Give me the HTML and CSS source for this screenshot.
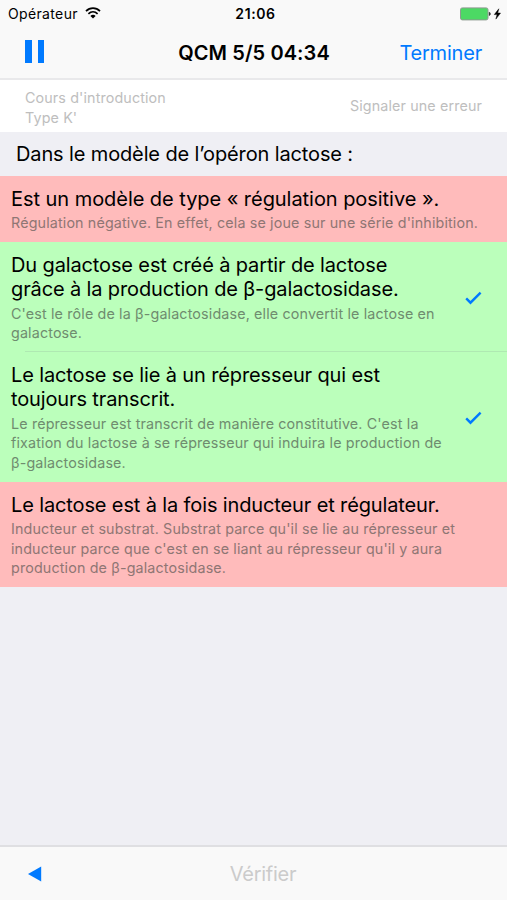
FILE: index.html
```html
<!DOCTYPE html>
<html lang="fr">
<head>
    <meta charset="UTF-8">
    <meta name="viewport" content="width=device-width, initial-scale=1.0">
    <title>QCM 5/5</title>
    <link rel="stylesheet" href="styles.css">
</head>
<body>
    <header>
        <div class="status-bar">
            <div class="carrier">
                <span>Opérateur</span>
                <svg class="wifi" width="16" height="12" viewBox="0 0 16 12" fill="none" stroke="#000" stroke-width="1.7">
                    <path d="M1 4.2C5 .2 11 .2 15 4.2M3.4 6.8c2.7-2.5 6.5-2.5 9.2 0"/>
                    <path d="M5.4 8.9c1.5-1.4 3.7-1.4 5.2 0L8 11.5z" fill="#000" stroke="none"/>
                </svg>
            </div>
            <div class="clock">21:06</div>
            <div class="power">
                <svg width="42" height="14" viewBox="0 0 42 14">
                    <rect x=".5" y=".9" width="27.5" height="12" rx="1.8" fill="#4cd964" stroke="#8d9a90"/>
                    <path d="M29.2 5.2c1.6.3 1.6 3.1 0 3.4z" fill="#222" stroke="#222" stroke-width=".5"/>
                    <path d="M38.8 1.8L34.3 7.6h2.8l-1.2 4.5 4.6-6h-2.8z" fill="#000" stroke="#000" stroke-width=".5"/>
                </svg>
            </div>
        </div>
        <nav class="nav-bar">
            <button class="pause" aria-label="Pause"><span></span><span></span></button>
            <h1>QCM 5/5 04:34</h1>
            <button class="finish">Terminer</button>
        </nav>
    </header>

    <div class="info">
        <p class="course">Cours d'introduction<br>Type K'</p>
        <p class="report">Signaler une erreur</p>
    </div>

    <main>
        <h2 class="question">Dans le modèle de l’opéron lactose :</h2>

        <ul class="answers">
            <li class="answer wrong">
                <div class="text">
                    <h3 class="wide">Est un modèle de type « régulation positive ».</h3>
                    <p>Régulation négative. En effet, cela se joue sur une série d'inhibition.</p>
                </div>
            </li>
            <li class="answer right divided">
                <div class="text">
                    <h3>Du galactose est créé à partir de lactose<br>grâce à la production de β-galactosidase.</h3>
                    <p>C'est le rôle de la β-galactosidase, elle convertit le lactose en<br>galactose.</p>
                </div>
                <svg class="check" width="17" height="14" viewBox="0 0 17 14"><path d="M1.2 7.4l4.3 4.3L15.6 1.6" fill="none" stroke="#007aff" stroke-width="2.4"/></svg>
            </li>
            <li class="answer right">
                <div class="text">
                    <h3>Le lactose se lie à un répresseur qui est<br>toujours transcrit.</h3>
                    <p>Le répresseur est transcrit de manière constitutive. C'est la<br>fixation du lactose à se répresseur qui induira le production de<br>β-galactosidase.</p>
                </div>
                <svg class="check" width="17" height="14" viewBox="0 0 17 14"><path d="M1.2 7.4l4.3 4.3L15.6 1.6" fill="none" stroke="#007aff" stroke-width="2.4"/></svg>
            </li>
            <li class="answer wrong">
                <div class="text">
                    <h3>Le lactose est à la fois inducteur et régulateur.</h3>
                    <p>Inducteur et substrat. Substrat parce qu'il se lie au répresseur et<br>inducteur parce que c'est en se liant au répresseur qu'il y aura<br>production de β-galactosidase.</p>
                </div>
            </li>
        </ul>
    </main>

    <footer>
        <button class="back" aria-label="Question précédente">
            <svg width="14" height="16" viewBox="0 0 14 16"><path d="M0 8L13.2.6v14.8z" fill="#007aff"/></svg>
        </button>
        <button class="verify" disabled>Vérifier</button>
    </footer>
</body>
</html>
```

FILE: styles.css
```css
* {
    box-sizing: border-box;
    margin: 0;
    padding: 0;
}

body {
    font-family: Inter, "Liberation Sans", sans-serif;
    background-color: #efeff4;
    color: #000;
    display: flex;
    flex-direction: column;
    height: 100vh;
    overflow: hidden;
    white-space: nowrap;
}

button {
    font-family: inherit;
    border: none;
    background: none;
    color: #007aff;
    cursor: pointer;
}

header {
    height: 80px;
    background-color: #f9f9f9;
    border-bottom: 2px solid #e9e9eb;
}

.status-bar {
    display: grid;
    grid-template-columns: 1fr auto 1fr;
    align-items: center;
    height: 27px;
    padding: 0 5px 0 8px;
    font-size: 14px;
    letter-spacing: 0.35px;
}

.carrier {
    display: flex;
    align-items: center;
    gap: 7px;
}

.wifi {
    margin-top: -2px;
}

.clock {
    font-weight: 600;
    letter-spacing: 0.6px;
    padding-left: 1px;
}

.power {
    display: flex;
    justify-content: flex-end;
}

.nav-bar {
    display: grid;
    grid-template-columns: 1fr auto 1fr;
    align-items: center;
    height: 51px;
    padding: 0 25px;
}

.pause {
    display: flex;
    gap: 6px;
    margin-top: -2px;
}

.pause span {
    width: 6.5px;
    height: 23px;
    background-color: #007aff;
}

h1 {
    font-size: 20px;
    font-weight: 600;
    letter-spacing: 0.1px;
    padding-left: 1px;
}

.finish {
    justify-self: end;
    font-size: 20px;
    letter-spacing: -0.2px;
}

.info {
    display: flex;
    justify-content: space-between;
    height: 52px;
    padding: 8px 25px 0;
    background-color: #fff;
    color: #bebebe;
    font-size: 14.3px;
    line-height: 19.6px;
    letter-spacing: 0.13px;
}

.report {
    padding-top: 8px;
}

main {
    flex: 1;
}

.question {
    height: 43.5px;
    padding-left: 16px;
    font-size: 20px;
    font-weight: 400;
    line-height: 45px;
    letter-spacing: -0.13px;
}

.answers {
    list-style: none;
}

.answer {
    display: flex;
    justify-content: space-between;
    align-items: center;
    padding: 11px 25px 9px 11px;
    position: relative;
}

.wrong {
    background-color: #ffbbbb;
}

.right {
    background-color: #bbffbb;
}

.divided::after {
    content: "";
    position: absolute;
    left: 25px;
    right: 0;
    bottom: 0;
    height: 1px;
    background-color: #afe9b2;
}

h3 {
    font-size: 20px;
    font-weight: 400;
    line-height: 24.5px;
    letter-spacing: -0.13px;
}

.wide {
    letter-spacing: -0.05px;
}

.answer p {
    font-size: 14.3px;
    line-height: 19.6px;
    letter-spacing: 0.15px;
    margin-top: 2px;
}

.wrong p {
    color: #8f7674;
}

.right p {
    color: #6f8c6f;
}

footer {
    display: grid;
    grid-template-columns: 1fr auto 1fr;
    align-items: center;
    height: 55px;
    padding: 0 9px 0 28px;
    background-color: #f9f9f9;
    border-top: 2px solid #dfdfe2;
}

.back {
    justify-self: start;
    display: flex;
}

.verify {
    grid-column: 2;
    color: #cbcbcb;
    font-size: 20px;
    letter-spacing: -0.25px;
}
```
